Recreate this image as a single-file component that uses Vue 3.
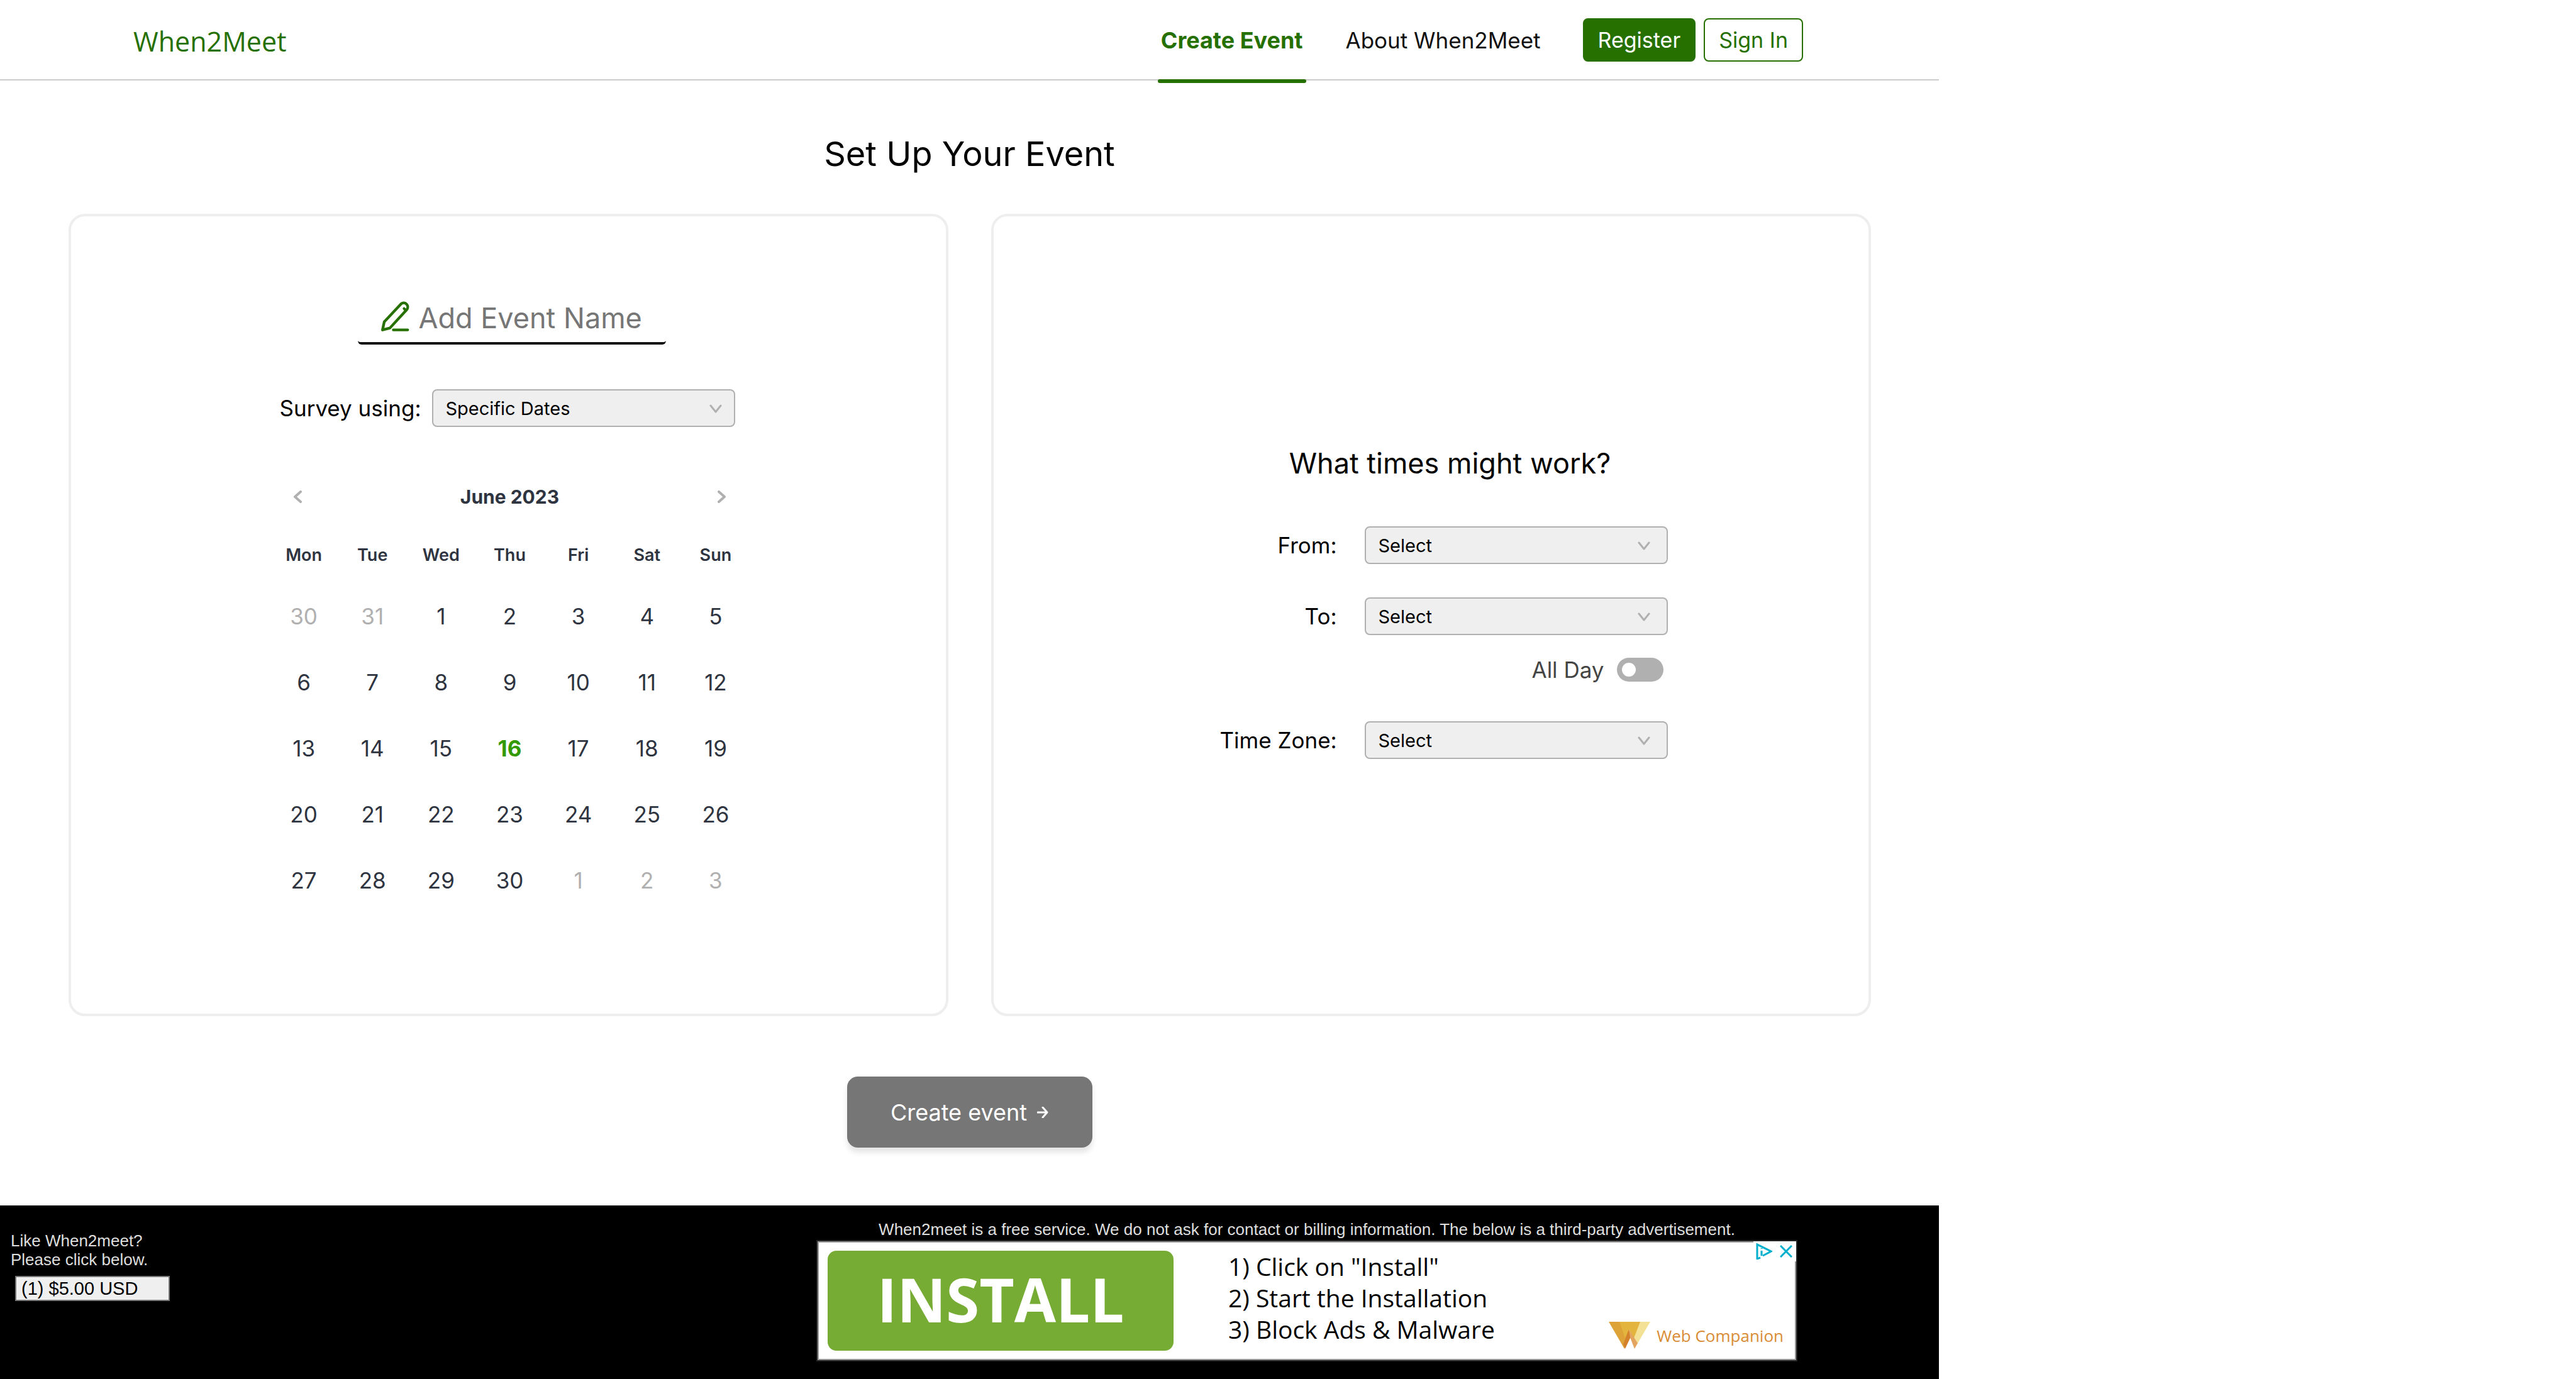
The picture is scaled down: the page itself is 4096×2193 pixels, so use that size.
<script setup>
import { ref } from 'vue'

const weekdays = ['Mon', 'Tue', 'Wed', 'Thu', 'Fri', 'Sat', 'Sun']
const weeks = [
  [30, 31, 1, 2, 3, 4, 5],
  [6, 7, 8, 9, 10, 11, 12],
  [13, 14, 15, 16, 17, 18, 19],
  [20, 21, 22, 23, 24, 25, 26],
  [27, 28, 29, 30, 1, 2, 3],
]
const today = 16

// Leading and trailing days that belong to the neighbouring months
function isOutside(day, row) {
  return (row === 0 && day > 7) || (row === weeks.length - 1 && day < 7)
}

const eventName = ref('')
const allDay = ref(false)
const steps = ['1) Click on "Install"', '2) Start the Installation', '3) Block Ads & Malware']
</script>

<template>
  <div class="page">
    <header class="topbar">
      <a class="logo" href="#">When2Meet</a>
      <nav class="nav">
        <a class="nav-link active" href="#">Create Event</a>
        <a class="nav-link" href="#">About When2Meet</a>
      </nav>
      <div class="account">
        <button class="btn solid" type="button">Register</button>
        <button class="btn outline" type="button">Sign In</button>
      </div>
    </header>

    <main>
      <h1>Set Up Your Event</h1>
      <div class="cards">
        <section class="card dates">
          <div class="column">
            <label class="name-field">
              <svg class="pencil" viewBox="0 0 46 48" fill="none" stroke="currentColor" stroke-width="4.3" stroke-linecap="round" stroke-linejoin="round" aria-hidden="true">
                <path d="M2.2 45.7 L5 32.8 L32 4 A6.5 6.5 0 0 1 41 13.2 L14 42.6 Z" />
                <path d="M36.5 11.8 L39 14.2" />
                <path d="M19.4 45.7 H42.2" />
              </svg>
              <input v-model="eventName" type="text" placeholder="Add Event Name" aria-label="Event name" />
            </label>

            <div class="survey">
              <label for="survey">Survey using:</label>
              <span class="select">
                <select id="survey"><option>Specific Dates</option></select>
                <svg viewBox="0 0 20 14" aria-hidden="true"><path d="M2 2 L10 12 L18 2" /></svg>
              </span>
            </div>

            <div class="month">
              <button type="button" aria-label="Previous month">
                <svg viewBox="0 0 14 20" aria-hidden="true"><path d="M12 2 L3 10 L12 18" /></svg>
              </button>
              <h2>June 2023</h2>
              <button type="button" aria-label="Next month">
                <svg viewBox="0 0 14 20" aria-hidden="true"><path d="M2 2 L11 10 L2 18" /></svg>
              </button>
            </div>

            <table class="calendar">
              <thead>
                <tr><th v-for="d in weekdays" :key="d" scope="col">{{ d }}</th></tr>
              </thead>
              <tbody>
                <tr v-for="(week, row) in weeks" :key="row">
                  <td v-for="day in week" :key="day" :class="{ outside: isOutside(day, row), today: day === today }">{{ day }}</td>
                </tr>
              </tbody>
            </table>
          </div>
        </section>

        <section class="card times">
          <h2>What times might work?</h2>
          <div class="time-grid">
            <label for="from">From:</label>
            <span class="select">
              <select id="from"><option>Select</option></select>
              <svg viewBox="0 0 20 14" aria-hidden="true"><path d="M2 2 L10 12 L18 2" /></svg>
            </span>
            <label class="to" for="to">To:</label>
            <span class="select to">
              <select id="to"><option>Select</option></select>
              <svg viewBox="0 0 20 14" aria-hidden="true"><path d="M2 2 L10 12 L18 2" /></svg>
            </span>
            <label class="all-day">
              All Day
              <input v-model="allDay" type="checkbox" role="switch" />
            </label>
            <label for="zone">Time Zone:</label>
            <span class="select">
              <select id="zone"><option>Select</option></select>
              <svg viewBox="0 0 20 14" aria-hidden="true"><path d="M2 2 L10 12 L18 2" /></svg>
            </span>
          </div>
        </section>
      </div>

      <button class="create" type="button">
        Create event
        <svg viewBox="0 0 18 18" aria-hidden="true"><path d="M1 9 H16 M9 1 L16 9 L9 17" /></svg>
      </button>
    </main>

    <footer class="footer">
      <div class="donate">
        <label for="amount">Like When2meet?<br />Please click below.</label>
        <select id="amount"><option>(1) $5.00 USD</option></select>
      </div>
      <div class="sponsor">
        <p>When2meet is a free service. We do not ask for contact or billing information. The below is a third-party advertisement.</p>
        <div class="ad">
          <button class="install" type="button">INSTALL</button>
          <ul class="steps">
            <li v-for="s in steps" :key="s">{{ s }}</li>
          </ul>
          <div class="brand">
            <svg viewBox="0 0 66 43" aria-hidden="true">
              <path d="M0 0 H18 L33 14 L25 43 Z" fill="#dda238" />
              <path d="M17 0 H51 L42 30 L32 12 L26 26 Z" fill="#e3b53f" />
              <path d="M50 0 H66 L45 36 L40 26 Z" fill="#f3e296" />
              <path d="M32 12 L35 24 L26 43 L23 36 Z" fill="#d3812b" />
              <path d="M32 12 L46 34 L41 43 L34 25 Z" fill="#e2a45f" />
            </svg>
            <span>Web Companion</span>
          </div>
          <div class="ad-choices">
            <svg class="info" viewBox="0 0 26 26" aria-hidden="true">
              <path d="M7 23 L2 25 V2 L24 13 L11 20" />
              <path d="M9 12 V20 M9 8 V9" />
            </svg>
            <svg class="close" viewBox="0 0 20 20" aria-hidden="true"><path d="M1 1 L19 19 M19 1 L1 19" /></svg>
          </div>
        </div>
      </div>
    </footer>
  </div>
</template>

<style>
body {
  margin: 0;
  background: #fff;
}
</style>

<style scoped>
.page {
  box-sizing: border-box;
  width: calc(100% * 3083 / 4096);
  color: #000;
  font-family: "Inter", "Noto Sans", sans-serif;
  font-size: 35px;
}
.page *,
.page *::before {
  box-sizing: border-box;
}
button,
input,
select {
  font-family: inherit;
  color: inherit;
}
h1,
h2,
p,
ul {
  margin: 0;
  padding: 0;
  font-weight: 400;
}
a {
  color: inherit;
  text-decoration: none;
}

/* Top bar */
.topbar {
  display: flex;
  align-items: stretch;
  height: 128px;
  padding: 0 216px 0 212px;
  border-bottom: 2px solid #cbcbcb;
}
.logo {
  align-self: center;
  margin-right: auto;
  padding-top: 6px;
  color: #267000;
  font-family: "Open Sans", "Noto Sans", sans-serif;
  font-size: 43px;
  line-height: 60px;
}
.nav {
  display: flex;
  gap: 58px;
  margin-right: 62px;
}
.nav-link {
  position: relative;
  padding: 0 5px;
  color: #111;
  line-height: 128px;
}
.nav-link.active {
  color: #267000;
  font-size: 36px;
  font-weight: 700;
}
.nav-link.active::after {
  content: "";
  position: absolute;
  left: 0;
  right: 0;
  bottom: -6px;
  height: 6px;
  border-radius: 3px;
  background: #267000;
}
.account {
  display: flex;
  align-items: center;
  gap: 13px;
}
.btn {
  height: 69px;
  padding: 0 22px;
  border: 2px solid #267000;
  border-radius: 8px;
  font-size: 34px;
}
.solid {
  background: #267000;
  color: #fff;
}
.outline {
  background: #fff;
  color: #267000;
}

/* Set-up form */
h1 {
  padding: 82px 0 60px;
  font-size: 54px;
  line-height: 70px;
  text-align: center;
}
.cards {
  display: grid;
  grid-template-columns: 1fr 1fr;
  gap: 68px;
  padding: 0 108px 0 109px;
}
.card {
  border: 4px solid #eee;
  border-radius: 26px;
}
.dates {
  padding: 118px 0 160px 4px;
}
.column {
  width: 764px;
  margin: 0 auto;
}
.name-field {
  display: flex;
  align-items: center;
  gap: 14px;
  width: 490px;
  height: 86px;
  margin-left: 140px;
  padding-left: 37px;
  border-bottom: 4px solid #111;
  border-radius: 6px;
}
.pencil {
  flex: none;
  width: 46px;
  height: 48px;
  color: #267000;
}
.name-field input {
  width: 100%;
  min-width: 0;
  height: 60px;
  padding: 4px 0 0;
  border: 0;
  outline: 0;
  background: none;
  font-size: 45px;
}
.name-field input::placeholder {
  color: #767676;
  opacity: 1;
}
.survey {
  display: flex;
  align-items: center;
  justify-content: space-between;
  margin-top: 71px;
  padding: 0 24px 0 16px;
}
.select {
  position: relative;
  width: 482px;
  height: 60px;
}
.select select {
  appearance: none;
  width: 100%;
  height: 60px;
  padding: 0 20px;
  border: 2px solid #b0b0b0;
  border-radius: 8px;
  background: #efefef;
  font-size: 29px;
}
.select svg {
  position: absolute;
  top: 24px;
  right: 21px;
  width: 20px;
  height: 14px;
}
.time-grid .select svg {
  right: 28px;
}
.select svg path,
.month svg path {
  fill: none;
  stroke: #b0b0b0;
  stroke-width: 3;
  stroke-linecap: round;
  stroke-linejoin: round;
}
.month svg path {
  stroke-width: 4;
}
.month {
  display: flex;
  align-items: center;
  justify-content: space-between;
  height: 40px;
  margin-top: 91px;
  padding: 0 24px;
  color: #2f3441;
}
.month h2 {
  font-size: 30px;
  font-weight: 700;
  line-height: 40px;
}
.month button {
  display: grid;
  place-items: center;
  width: 40px;
  height: 40px;
  padding: 0;
  border: 0;
  background: none;
}
.month svg {
  width: 14px;
  height: 20px;
}
.calendar {
  width: 100%;
  margin-top: 28px;
  border-collapse: collapse;
  table-layout: fixed;
  color: #2f3441;
  text-align: center;
}
.calendar th {
  height: 89px;
  padding: 0;
  font-size: 27px;
  font-weight: 600;
}
.calendar td {
  height: 105px;
  padding: 0;
  font-size: 35px;
}
.calendar .outside {
  color: #b0b0b0;
}
.calendar .today {
  color: #339900;
  font-weight: 700;
}

.times {
  display: flex;
  flex-direction: column;
  align-items: center;
  padding: 363px 0 0 40px;
}
.times h2 {
  padding-left: 20px;
  font-size: 45px;
  line-height: 60px;
}
.time-grid {
  display: grid;
  grid-template-columns: 186px 482px;
  column-gap: 44px;
  align-items: center;
  margin-top: 70px;
  text-align: right;
  white-space: nowrap;
}
.time-grid .select {
  text-align: left;
}
.to {
  margin-top: 53px;
}
.all-day {
  grid-column: 1 / -1;
  display: flex;
  align-items: center;
  justify-content: flex-end;
  gap: 20px;
  height: 38px;
  margin: 36px 7px 63px 0;
  color: #444;
}
.all-day input {
  appearance: none;
  display: flex;
  align-items: center;
  width: 74px;
  height: 38px;
  margin: 0;
  padding: 0 8px;
  border-radius: 19px;
  background: #b0b0b0;
}
.all-day input::before {
  content: "";
  width: 22px;
  height: 22px;
  border-radius: 50%;
  background: #fff;
}
.all-day input:checked {
  justify-content: flex-end;
  background: #267000;
}

.create {
  display: flex;
  align-items: center;
  justify-content: center;
  gap: 16px;
  width: 390px;
  height: 113px;
  margin: 96px auto 92px;
  border: 0;
  border-radius: 17px;
  background: #767676;
  box-shadow: 0 8px 9px rgba(0, 0, 0, 0.1);
  color: #fff;
  font-size: 36px;
}
.create svg {
  width: 18px;
  height: 18px;
  fill: none;
  stroke: #fff;
  stroke-width: 3;
  stroke-linecap: round;
  stroke-linejoin: round;
}

/* Footer */
.footer {
  display: flex;
  justify-content: space-between;
  padding: 23px 225px 28px 17px;
  background: #000;
  color: #dedede;
  font-family: "Liberation Sans", Arial, sans-serif;
  font-size: 26px;
  line-height: 30px;
}
.donate {
  display: flex;
  flex-direction: column;
  padding-top: 18px;
}
.donate select {
  appearance: none;
  width: 246px;
  height: 40px;
  margin: 11px 0 0 7px;
  padding: 0 8px;
  border: 2px solid #767676;
  border-radius: 0;
  background: #efefef;
  color: #000;
  font-size: 29px;
}
.sponsor {
  width: 1560px;
}
.sponsor p {
  margin-bottom: 2px;
  text-align: center;
  white-space: nowrap;
}
.ad {
  position: relative;
  display: flex;
  align-items: center;
  height: 193px;
  padding: 0 20px 0 16px;
  border: 2px solid #252525;
  background: #fff;
  box-shadow: inset 0 0 0 2px #999;
  font-family: "Open Sans", "Noto Sans", sans-serif;
}
.install {
  width: 550px;
  height: 159px;
  padding: 0 0 6px;
  border: 0;
  border-radius: 14px;
  background: #77ac34;
  color: #fff;
  font-size: 96px;
  font-weight: 700;
  line-height: 150px;
}
.steps {
  margin: 0 0 10px 87px;
  color: #000;
  font-size: 39px;
  line-height: 50px;
  list-style: none;
}
.brand {
  display: flex;
  align-items: center;
  align-self: flex-end;
  gap: 10px;
  margin: 0 0 18px auto;
  color: #d98c35;
  font-size: 26px;
}
.brand svg {
  width: 66px;
  height: 43px;
}
.ad-choices {
  position: absolute;
  top: 0;
  right: 0;
  display: flex;
  align-items: center;
  gap: 12px;
  height: 32px;
  padding: 0 6px 0 4px;
  background: #fff;
}
.ad-choices svg {
  fill: none;
  stroke: #00aecd;
  stroke-width: 3;
}
.info {
  width: 26px;
  height: 26px;
}
.close {
  width: 20px;
  height: 20px;
}
</style>
